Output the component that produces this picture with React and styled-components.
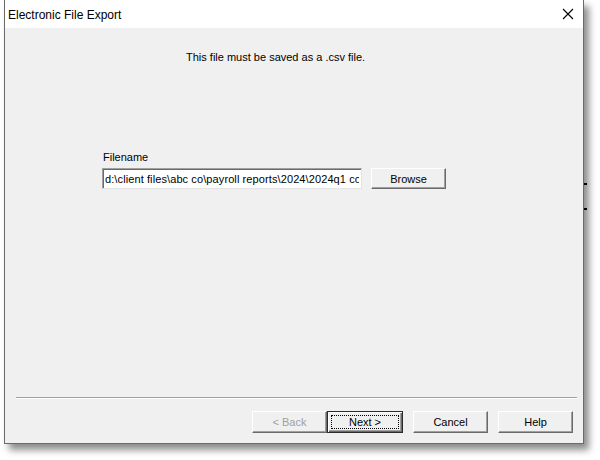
import React from 'react';
import styled, { createGlobalStyle } from 'styled-components';

const GlobalStyle = createGlobalStyle`
  html, body {
    margin: 0;
    padding: 0;
    background: #ffffff;
  }
  body {
    font-family: "Liberation Sans", Arial, sans-serif;
    font-size: 11px;
    color: #000;
  }
`;

const Page = styled.div`
  width: 600px;
  height: 460px;
  padding-left: 4px;
  box-sizing: border-box;
`;

const Window = styled.div`
  position: relative;
  width: 580px;
  height: 444px;
  box-sizing: border-box;
  border: 1px solid #6a6a6a;
  border-top: none;
  background: #f0f0f0;
  display: flex;
  flex-direction: column;
  box-shadow: 5px 6px 7px rgba(0, 0, 0, 0.45);
`;

const TitleBar = styled.div`
  height: 28px;
  background: #ffffff;
  display: flex;
  align-items: center;
  justify-content: space-between;
  padding: 0 0 0 3px;
  flex-shrink: 0;
`;

const Title = styled.span`
  font-size: 12px;
  font-family: "Liberation Sans", Arial, sans-serif;
  margin-top: 2px;
`;

const CloseButton = styled.div`
  width: 30px;
  height: 28px;
  display: flex;
  align-items: center;
  justify-content: center;
`;

const Content = styled.div`
  flex: 1;
  display: flex;
  flex-direction: column;
`;

const Message = styled.div`
  margin-top: 22px;
  padding-left: 181px;
  line-height: 14px;
`;

const FileGroup = styled.div`
  margin: 87px 0 0 97px;
  display: flex;
  flex-direction: column;
  gap: 4px;
`;

const Label = styled.div`
  padding-left: 1px;
  line-height: 13px;
`;

const Row = styled.div`
  display: flex;
  align-items: center;
  gap: 9px;
`;

const FileInput = styled.input`
  width: 260px;
  height: 21px;
  box-sizing: border-box;
  padding: 0 2px;
  font-family: "Liberation Sans", Arial, sans-serif;
  font-size: 11px;
  letter-spacing: 0.1px;
  color: #000;
  background: #fff;
  border: 1px solid;
  border-color: #a0a0a0 #e3e3e3 #e3e3e3 #a0a0a0;
  box-shadow: inset 1px 1px 0 #6a6a6a;
  outline: none;
`;

const Button = styled.button`
  width: ${p => p.$w || 75}px;
  height: ${p => p.$h || 22}px;
  box-sizing: border-box;
  padding: 0;
  font-family: "Liberation Sans", Arial, sans-serif;
  font-size: 11px;
  color: ${p => (p.disabled ? '#a0a0a0' : '#000')};
  background: #f0f0f0;
  border: 1px solid;
  border-color: #ffffff #6a6a6a #6a6a6a #ffffff;
  box-shadow: inset -1px -1px 0 #a0a0a0;
  display: flex;
  align-items: center;
  justify-content: center;
`;

const DefaultButton = styled(Button)`
  border: 1px solid #2b2b2b;
  box-shadow: inset 1px 1px 0 #fff, inset -1px -1px 0 #6a6a6a, inset -2px -2px 0 #a0a0a0;
  padding: 3px;
`;

const FocusRect = styled.span`
  flex: 1;
  align-self: stretch;
  border: 1px dotted #000;
  display: flex;
  align-items: center;
  justify-content: center;
`;

const Spacer = styled.div`
  flex: 1;
`;

const Separator = styled.div`
  height: 0;
  margin: 0 6px 0 11px;
  border-top: 1px solid #a0a0a0;
  border-bottom: 1px solid #ffffff;
`;

const Footer = styled.div`
  display: flex;
  justify-content: flex-end;
  align-items: center;
  padding: 12px 10px 10px 0;
  gap: 10px;
`;

const BackNext = styled.div`
  display: flex;
`;

const EdgeMark = styled.div`
  position: absolute;
  right: -4px;
  top: ${p => p.$top}px;
  width: 3px;
  height: 2px;
  background: #000;
`;

const CloseIcon = () => (
  <svg width="12" height="12" viewBox="0 0 12 12">
    <path d="M1 1 L11 11 M11 1 L1 11" stroke="#000" strokeWidth="1.1" fill="none" />
  </svg>
);

export default function App() {
  return (
    <Page>
      <GlobalStyle />
      <Window>
        <TitleBar>
          <Title>Electronic File Export</Title>
          <CloseButton>
            <CloseIcon />
          </CloseButton>
        </TitleBar>
        <Content>
          <Message>This file must be saved as a .csv file.</Message>
          <FileGroup>
            <Label>Filename</Label>
            <Row>
              <FileInput readOnly value="d:\client files\abc co\payroll reports\2024\2024q1 company" />
              <Button $w={75} $h={21}>Browse</Button>
            </Row>
          </FileGroup>
          <Spacer />
          <Separator />
          <Footer>
            <BackNext>
              <Button disabled>&lt; Back</Button>
              <DefaultButton $w={76}>
                <FocusRect>Next &gt;</FocusRect>
              </DefaultButton>
            </BackNext>
            <Button>Cancel</Button>
            <Button>Help</Button>
          </Footer>
        </Content>
        <EdgeMark $top={183} />
        <EdgeMark $top={208} />
      </Window>
    </Page>
  );
}
